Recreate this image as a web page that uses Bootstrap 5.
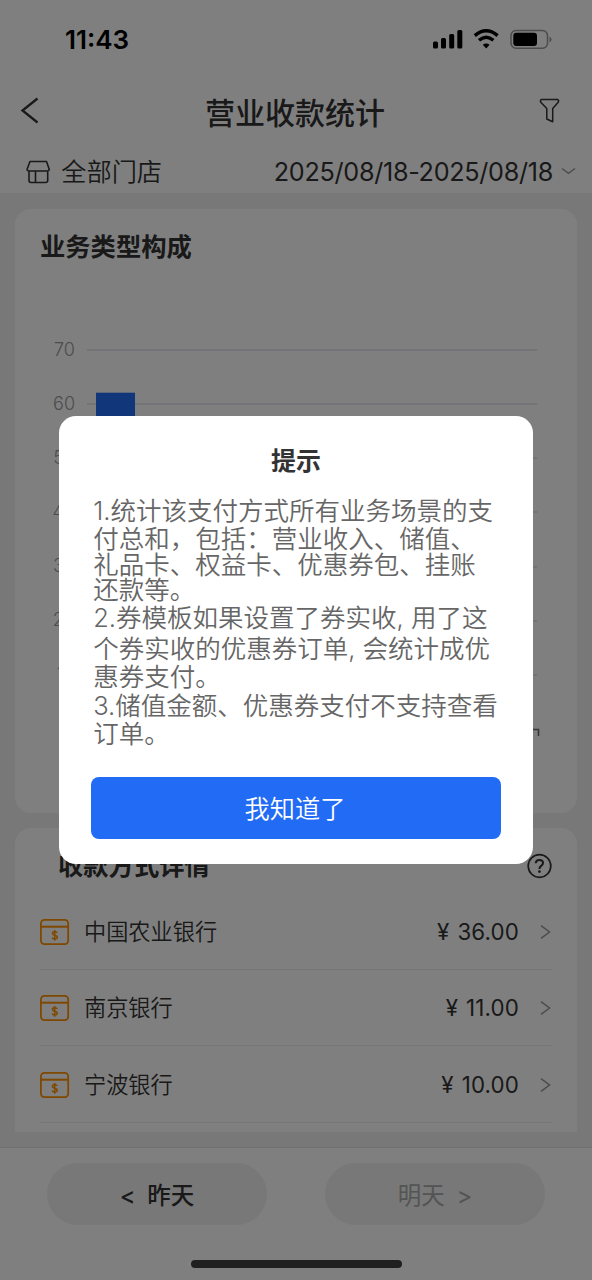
<!DOCTYPE html>
<html lang="zh-CN">
<head>
<meta charset="utf-8">
<meta name="viewport" content="width=device-width, initial-scale=1">
<title>营业收款统计</title>
<link href="https://cdn.jsdelivr.net/npm/bootstrap@5.3.0/dist/css/bootstrap.min.css" rel="stylesheet">
<style>
  body { font-family: Inter, "Noto Sans CJK SC", sans-serif; color: #333; background: #fff; height: 1280px; overflow: hidden; }
  svg { display: block; flex: none; overflow: visible; }
  .screen { height: 1280px; }
  .status-bar { height: 78px; padding: 2px 40px 0 65px; color: #000; }
  .clock { font-size: 26px; font-weight: 600; letter-spacing: 0; line-height: 30px; }
  .signals { margin: -2px -1px 0 0; }
  .title-bar { height: 68px; padding: 0 32px 0 21px; }
  .page-title { font-size: 30px; font-weight: 500; line-height: 40px; margin: 2px 0 0 11px; }
  .filter-bar { height: 47px; padding: 5px 16px 0 26px; font-size: 25.2px; line-height: 38px; font-weight: 350; }
  .date-range { letter-spacing: -.3px; font-weight: 400; }
  .content-area { height: 954px; background: #f0f0f0; padding: 16px 15px 0 15px; overflow: hidden; }
  .panel { background: #fff; border-radius: 16px; }
  .chart-panel { height: 604px; padding: 19px 0 0 25px; }
  .pay-panel { height: 304px; margin-top: 15px; padding: 19px 25px 0 25px; border-radius: 16px 16px 0 0; }
  .panel-title { font-size: 25.3px; font-weight: 700; line-height: 38px; margin: 0; }
  .pay-head { height: 38px; padding-left: 18px; margin-bottom: 8px; }
  .pay-row { height: 76.5px; border-bottom: 1px solid #ececec; font-size: 22.2px; line-height: 32px; padding-top: 2px; font-weight: 350; }
  .pay-name { margin-left: 15px; }
  .amount { font-size: 22.3px; letter-spacing: .15px; word-spacing: 1.5px; margin-right: -1px; font-weight: 400; }
  .bottom-bar { height: 133px; border-top: 1px solid #e2e2e2; padding: 15px 47px 0; }
  .day-btn { width: 220px; height: 62px; border-radius: 31px; background: #f0f0f0; color: #333; font-size: 23.5px; font-weight: 500; gap: 12px; border: 0; padding: 3px 0 0; }
  .day-btn:disabled { background: #f0f0f0; color: #a8a8a8; opacity: 1; font-weight: 400; }
  .home-line { width: 211px; height: 8px; border-radius: 4px; background: #404040; margin: 35px auto 0; }
  .dim { background: rgba(0,0,0,.5); z-index: 10; padding-top: 416px; }
  .tip-dialog { width: 473.500px; height: 448px; margin-left: 59.200px; background: #fff; border-radius: 17px; padding: 26px 32px 0; }
  .tip-title { font-size: 25px; font-weight: 700; line-height: 38px; margin: 0; }
  .tip-text { display: grid; grid-template-rows: 28px 26px 25px 28px 31px 28px 29px 28px 28px; margin: 18px 0 0 2px; height: 279px; font-size: 25.5px; line-height: 25px; font-weight: 350; color: #666; white-space: nowrap; }
  .tip-btn { height: 62px; width: 409.500px; border-radius: 8px; background: #226cf5; color: #fff; font-size: 25.2px; font-weight: 350; line-height: 36px; border: 0; padding: 2px 2px 0 0; }
</style>
</head>
<body>
<main class="screen d-flex flex-column position-relative">
  <header>
    <div class="status-bar d-flex align-items-center justify-content-between">
      <span class="clock">11:43</span>
      <svg class="signals" width="119" height="20" viewBox="0 0 119 20">
        <g fill="#000">
          <rect x="-1" y="12.5" width="5" height="7" rx="1.5"/><rect x="7" y="9" width="5" height="10.5" rx="1.5"/>
          <rect x="15.2" y="5" width="5" height="14.500" rx="1.5"/><rect x="23.3" y="1" width="5" height="18.500" rx="1.5"/>
          <path d="M52.200 19.500 L48.800 15.800 Q52.200 13.300 55.600 15.800 Z"/>
        </g>
        <path d="M40.800 6.600 Q52.200 -3.200 63.600 6.600 M45 11.300 Q52.200 5.200 59.400 11.300" fill="none" stroke="#000" stroke-width="3.400"/>
        <rect x="77" y="1.500" width="36.500" height="17.800" rx="5" fill="none" stroke="#999" stroke-width="1.500"/>
        <rect x="79.300" y="3.700" width="23.700" height="13.300" rx="3" fill="#000"/>
        <path d="M115.500 7.500 Q117.500 8.500 117.500 10.400 T115.500 13.400 Z" fill="#999"/>
      </svg>
    </div>
    <div class="title-bar d-flex align-items-center justify-content-between">
      <svg width="18" height="26" viewBox="0 0 18 26"><path d="M16.500 -.500 L1.500 11.500 L16.500 23.500" fill="none" stroke="#333" stroke-width="2.300"/></svg>
      <h1 class="page-title">营业收款统计</h1>
      <svg width="20" height="26" viewBox="0 0 20 26"><path d="M1.200 .500 H17.800 Q19.300 1.500 18 3.500 L12.700 9.600 V22.800 L6.800 20 V9.600 L1 3.500 Q-.200 1.500 1.200 .500 Z" fill="none" stroke="#333" stroke-width="1.500" stroke-linejoin="round"/></svg>
    </div>
    <div class="filter-bar d-flex align-items-center justify-content-between">
      <div class="d-flex align-items-center">
        <svg width="25" height="24" viewBox="0 0 25 24" fill="none" stroke="#333" stroke-width="1.600" stroke-linejoin="round"><path d="M4 1.500 H20.500 L23.300 9.500 Q22.800 11 21.500 11 H3 Q1.200 11 1 9.500 Z M3 11 V20.500 Q3 22.500 5 22.500 H19.500 Q21.700 22.500 21.700 20.500 V11 M9.500 11 V22.500"/></svg>
        <span class="ms-2 ps-0">&#8202;全部门店</span>
      </div>
      <div class="d-flex align-items-center">
        <span class="date-range">2025/08/18-2025/08/18</span>
        <svg class="ms-2" width="15" height="8" viewBox="0 0 15 8"><path d="M1 .500 L7.500 5.300 L14 .500" fill="none" stroke="#999" stroke-width="1.500"/></svg>
      </div>
    </div>
  </header>

  <section class="content-area">
    <article class="panel chart-panel">
      <h2 class="panel-title">业务类型构成</h2>
      <svg width="510" height="480" viewBox="40 266 510 480" font-family="Inter" font-size="18" font-weight="300" fill="#999" text-anchor="end">
        <path d="M87 350H537.500M87 404H537.500M87 458H537.500M87 512H537.500M87 567H537.500M87 621H537.500M87 675H537.500" stroke="#dce1ec" stroke-width="1.500"/>
        <path d="M87 729.500H538.500V736" fill="none" stroke="#6e7079" stroke-width="1.600"/>
        <text x="75" y="356">70</text><text x="75" y="410">60</text><text x="75" y="464">50</text><text x="75" y="518">40</text><text x="75" y="572">30</text><text x="75" y="626">20</text><text x="75" y="680">10</text>
        <rect x="96" y="392.700" width="39" height="337" fill="#226cf5"/>
      </svg>
    </article>

    <article class="panel pay-panel">
      <div class="pay-head d-flex align-items-center justify-content-between">
        <h2 class="panel-title">收款方式详情</h2>
        <svg width="25" height="25" viewBox="0 0 25 25" fill="none" stroke="#333" stroke-width="1.700"><circle cx="12.500" cy="12" r="11.300"/><path d="M8.700 9.200 Q8.900 5.900 12.500 5.900 Q16 5.900 16 9 Q16 10.600 14.200 11.900 Q12.400 13.200 12.400 15" stroke-width="2"/><circle cx="12.400" cy="17.600" r="1.400" fill="#333" stroke="none"/></svg>
      </div>
      <div class="pay-row d-flex align-items-center">
        <svg width="29" height="26" viewBox="0 0 29 26"><use href="#wallet"/></svg>
        <span class="pay-name">中国农业银行</span><span class="amount ms-auto">¥ 36.00</span>
        <svg class="ms-4" width="10" height="14" viewBox="5 0 10 14"><use href="#next"/></svg>
      </div>
      <div class="pay-row d-flex align-items-center">
        <svg width="29" height="26" viewBox="0 0 29 26"><use href="#wallet"/></svg>
        <span class="pay-name">南京银行</span><span class="amount ms-auto">¥ 11.00</span>
        <svg class="ms-4" width="10" height="14" viewBox="5 0 10 14"><use href="#next"/></svg>
      </div>
      <div class="pay-row d-flex align-items-center">
        <svg width="29" height="26" viewBox="0 0 29 26"><use href="#wallet"/></svg>
        <span class="pay-name">宁波银行</span><span class="amount ms-auto">¥ 10.00</span>
        <svg class="ms-4" width="10" height="14" viewBox="5 0 10 14"><use href="#next"/></svg>
      </div>
    </article>
  </section>

  <footer class="bottom-bar">
    <div class="d-flex justify-content-between">
      <button class="day-btn d-flex align-items-center justify-content-center"><span>&lt;</span><span>昨天</span></button>
      <button class="day-btn d-flex align-items-center justify-content-center" disabled><span>明天</span><span>&gt;</span></button>
    </div>
    <div class="home-line"></div>
  </footer>

  <div class="dim position-absolute top-0 start-0 w-100 h-100">
    <div class="tip-dialog" role="dialog" aria-modal="true">
      <h2 class="tip-title text-center">提示</h2>
      <div class="tip-text">
        <span>1.统计该支付方式所有业务场景的支</span>
        <span>付总和，包括：营业收入、储值、</span>
        <span>礼品卡、权益卡、优惠券包、挂账</span>
        <span>还款等。</span>
        <span>2.券模板如果设置了券实收, 用了这</span>
        <span>个券实收的优惠券订单, 会统计成优</span>
        <span>惠券支付。</span>
        <span>3.储值金额、优惠券支付不支持查看</span>
        <span>订单。</span>
      </div>
      <button class="tip-btn d-block">我知道了</button>
    </div>
  </div>
</main>

<svg width="0" height="0" aria-hidden="true">
  <defs>
    <g id="wallet" fill="none" stroke="#ff9000">
      <rect x=".900" y=".900" width="27.300" height="24.200" rx="3.500" stroke-width="1.800"/>
      <path d="M1 7.700 H28" stroke-width="2"/>
      <path d="M17.200 13.900 Q16.700 12.700 14.700 12.700 Q12.400 12.700 12.400 14.300 Q12.400 15.700 14.700 16.200 Q17.300 16.700 17.300 18.300 Q17.300 20 14.700 20 Q12.500 20 12.100 18.500 M14.700 11 V21.700" stroke-width="1.500"/>
    </g>
    <path id="next" d="M4 .700 L12.500 7 L4 13.300" fill="none" stroke="#999" stroke-width="1.500"/>
  </defs>
</svg>
<script src="https://cdn.jsdelivr.net/npm/bootstrap@5.3.0/dist/js/bootstrap.bundle.min.js"></script>
</body>
</html>
